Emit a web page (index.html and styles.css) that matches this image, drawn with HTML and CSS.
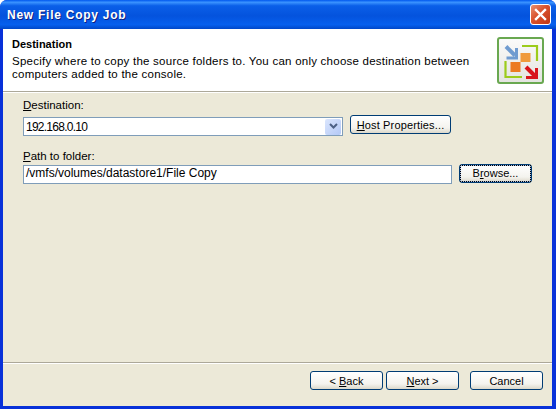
FILE: index.html
```html
<!DOCTYPE html>
<html lang="en">
<head>
  <meta charset="UTF-8" />
  <title>New File Copy Job</title>
  <link rel="stylesheet" href="styles.css">
</head>
<body>
  <div class="window">
    <div class="titlebar">
      <span class="title">New File Copy Job</span>
      <div class="close">
        <svg width="13" height="13" viewBox="0 0 13 13">
          <path d="M2 2 L11 11 M11 2 L2 11" stroke="#fff" stroke-width="2.4" stroke-linecap="square" fill="none"/>
        </svg>
      </div>
    </div>

    <div class="client">
      <div class="header">
        <div class="header-text">
          <h1>Destination</h1>
          <p>Specify where to copy the source folders to. You can only choose destination between<br>computers added to the console.</p>
        </div>
        <div class="logo">
          <svg width="36" height="36" viewBox="0 0 36 36">
            <path d="M19 3 H34 V18 M19 34 H2.500 V18" stroke="#9ccc1c" stroke-width="2.200" fill="none"/>
            <rect x="17.500" y="10" width="10" height="9" fill="#f09a3c"/>
            <rect x="7.500" y="19" width="10" height="10" fill="#ec7a22"/>
            <path d="M3 3.500 L12 12.500" stroke="#6f9bd0" stroke-width="4" fill="none"/>
            <path d="M13.500 5 V15 H3.500" stroke="#6f9bd0" stroke-width="3" fill="none"/>
            <path d="M23 24 L32 33" stroke="#d8141c" stroke-width="4" fill="none"/>
            <path d="M33.500 25 V34.500 H23" stroke="#d8141c" stroke-width="3" fill="none"/>
          </svg>
        </div>
      </div>

      <div class="content">
        <div class="field">
          <label class="field-label"><u>D</u>estination:</label>
          <div class="row row-combo">
            <div class="combo">
              <span class="combo-value">192.168.0.10</span>
              <span class="combo-arrow">
                <svg width="9" height="7" viewBox="0 0 9 7">
                  <path d="M1 1 L4.500 4.500 L8 1" stroke="#4d6185" stroke-width="2" fill="none"/>
                </svg>
              </span>
            </div>
            <button class="btn btn-host"><u>H</u>ost Properties...</button>
          </div>
        </div>

        <div class="field field-path">
          <label class="field-label"><u>P</u>ath to folder:</label>
          <div class="row row-path">
            <div class="textbox">/vmfs/volumes/datastore1/File Copy</div>
            <button class="btn btn-browse"><span>B<u>r</u>owse...</span></button>
          </div>
        </div>
      </div>

      <div class="footer">
        <button class="btn btn-nav">&lt; <u>B</u>ack</button>
        <button class="btn btn-nav"><u>N</u>ext &gt;</button>
        <button class="btn btn-nav btn-cancel">Cancel</button>
      </div>
    </div>
  </div>
</body>
</html>
```

FILE: styles.css
```css
html, body {
  margin: 0;
  padding: 0;
}

body {
  width: 556px;
  height: 409px;
  overflow: hidden;
  font-family: "Liberation Sans", Arial, sans-serif;
  font-size: 11px;
  color: #000;
}

.window {
  width: 556px;
  height: 409px;
  box-sizing: border-box;
  display: flex;
  flex-direction: column;
  background: #0831d9;
  border-radius: 7px 7px 0 0;
  overflow: hidden;
}

.titlebar {
  height: 29px;
  flex: none;
  box-sizing: border-box;
  display: flex;
  align-items: center;
  justify-content: space-between;
  padding: 1px 5px 0 7px;
  background: linear-gradient(to bottom, #0058ee 0%, #3a93ff 8%, #0a5fe8 20%, #0453dd 55%, #0660ee 85%, #0047c8 100%);
}

.title {
  color: #fff;
  font-weight: bold;
  font-size: 12px;
  letter-spacing: 0.75px;
  text-shadow: 1px 1px 0 #0f1f80;
}

.close {
  width: 21px;
  height: 21px;
  margin-top: -1px;
  box-sizing: border-box;
  display: flex;
  align-items: center;
  justify-content: center;
  background: linear-gradient(135deg, #e8906f 0%, #d9512c 45%, #bf3614 100%);
  border: 1px solid #fff;
  border-radius: 3px;
}

.client {
  flex: 1;
  margin: 0 4px 3px 3px;
  display: flex;
  flex-direction: column;
  background: #ece9d8;
}

.header {
  height: 63px;
  flex: none;
  box-sizing: border-box;
  display: flex;
  justify-content: space-between;
  background: #fff;
  border-bottom: 1px solid #aca899;
  box-shadow: 0 1px 0 #fff;
  padding: 9px 8px 0 9px;
}

.header h1 {
  margin: 0 0 4px;
  font-size: 11px;
  line-height: 13px;
  font-weight: bold;
}

.header p {
  margin: 0;
  font-size: 11.5px;
  letter-spacing: 0.24px;
  line-height: 13px;
}

.logo {
  width: 47px;
  height: 47px;
  box-sizing: border-box;
  flex: none;
  display: flex;
  align-items: center;
  justify-content: center;
  margin-top: -1px;
  background: linear-gradient(to bottom, #fafafa, #e4e4e0);
  border: 2px solid #69a850;
  border-radius: 3px;
}

.content {
  flex: 1;
  padding: 7px 0 0 20px;
}

.field-label {
  display: block;
  line-height: 13px;
  height: 13px;
  font-size: 11.5px;
}

.field-path {
  margin-top: 14px;
}

.row {
  display: flex;
  align-items: flex-start;
}

.row-combo {
  margin-top: 5px;
}

.row-path {
  margin-top: 1px;
}

.combo {
  width: 320px;
  height: 19px;
  box-sizing: border-box;
  display: flex;
  align-items: center;
  justify-content: space-between;
  background: #fff;
  border: 1px solid #7f9db9;
  padding: 0 1px 0 2px;
  font-size: 12px;
}

.combo-value {
  letter-spacing: -0.75px;
}

.combo-arrow {
  width: 16px;
  height: 16px;
  display: flex;
  align-items: center;
  justify-content: center;
  background: linear-gradient(135deg, #dbe6fd, #b3c8f6);
  border-radius: 2px;
}

.textbox {
  width: 429px;
  height: 19px;
  margin-top: 1px;
  box-sizing: border-box;
  background: #fff;
  border: 1px solid #7f9db9;
  padding: 0 2px;
  font-size: 12px;
  line-height: 15px;
}

.btn {
  height: 19px;
  box-sizing: border-box;
  padding: 0;
  font-family: inherit;
  font-size: 11px;
  color: #000;
  background: linear-gradient(to bottom, #fff, #f4f3ee 70%, #dcd8ca);
  border: 1px solid #003c74;
  border-radius: 3px;
}

.btn-host {
  width: 101px;
  margin-left: 7px;
  margin-top: -2px;
  letter-spacing: 0.15px;
}

.btn-browse {
  width: 73px;
  margin-left: 7px;
  box-shadow: inset 0 0 0 1px #a8bfe8;
}

.btn-browse span {
  display: block;
  margin: 1px;
  line-height: 13px;
  outline: 1px dotted #000;
  outline-offset: 0;
  padding: 1px 0;
}

.footer {
  height: 44px;
  flex: none;
  box-sizing: border-box;
  display: flex;
  border-top: 1px solid #aca899;
  box-shadow: inset 0 1px 0 #fff;
  padding: 8px 9px 0 307px;
}

.btn-nav {
  width: 73px;
  margin-right: 3px;
}

.btn-cancel {
  margin: 0 0 0 8px;
}
```
